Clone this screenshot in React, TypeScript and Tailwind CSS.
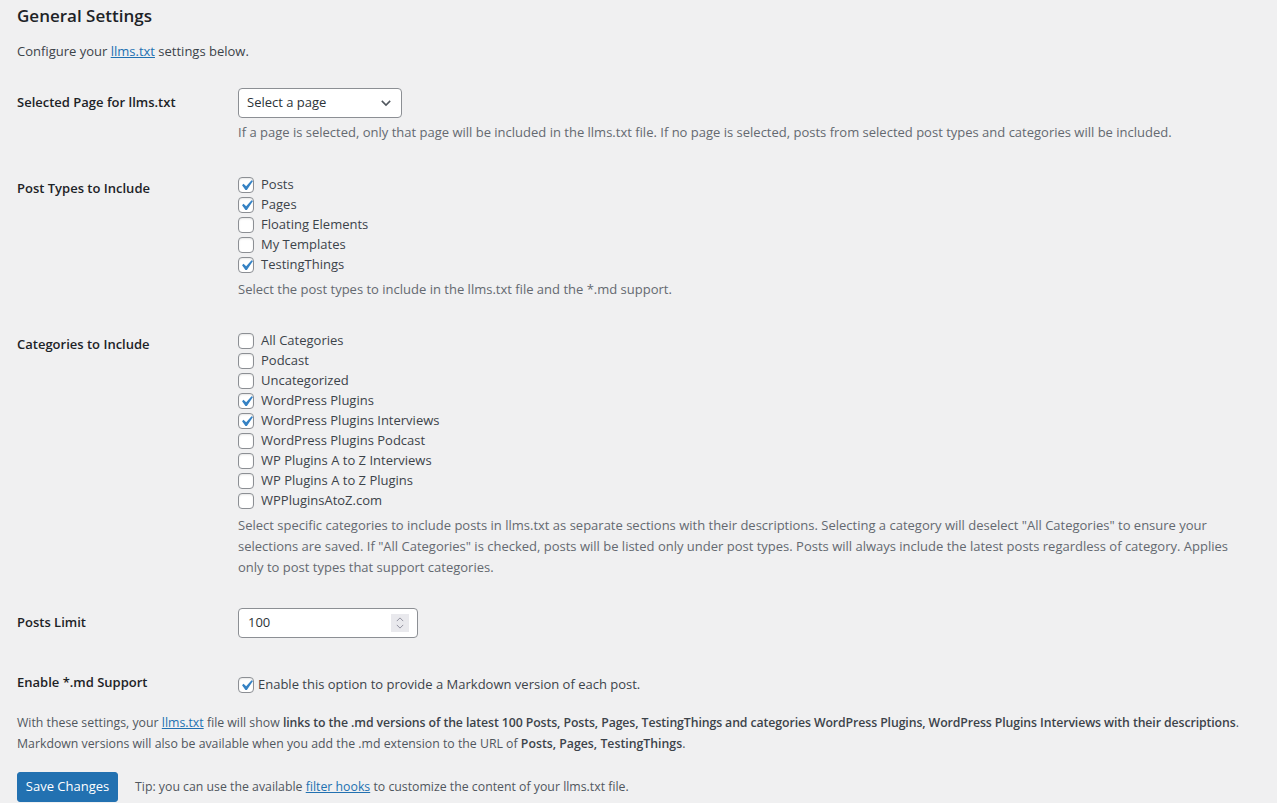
import React from "react";

const postTypes = [
  { label: "Posts", checked: true },
  { label: "Pages", checked: true },
  { label: "Floating Elements", checked: false },
  { label: "My Templates", checked: false },
  { label: "TestingThings", checked: true },
];

const categories = [
  { label: "All Categories", checked: false },
  { label: "Podcast", checked: false },
  { label: "Uncategorized", checked: false },
  { label: "WordPress Plugins", checked: true },
  { label: "WordPress Plugins Interviews", checked: true },
  { label: "WordPress Plugins Podcast", checked: false },
  { label: "WP Plugins A to Z Interviews", checked: false },
  { label: "WP Plugins A to Z Plugins", checked: false },
  { label: "WPPluginsAtoZ.com", checked: false },
];

function Checkbox({ checked }: { checked: boolean }) {
  return (
    <span className="relative inline-block w-4 h-4 shrink-0 rounded bg-white border border-[#8c8f94] shadow-[inset_0_1px_2px_rgba(0,0,0,0.1)]">
      {checked && (
        <svg
          viewBox="0 0 20 20"
          className="absolute -left-[3px] -top-[3px] w-[21px] h-[21px]"
        >
          <path
            d="M14.83 4.89l1.34.94-5.81 8.38H9.02L5.78 9.67l1.34-1.25 2.57 2.4z"
            fill="#3582c4"
          />
        </svg>
      )}
    </span>
  );
}

function CheckList({ items }: { items: { label: string; checked: boolean }[] }) {
  return (
    <div className="flex flex-col">
      {items.map((item) => (
        <label key={item.label} className="flex items-center gap-[7px] h-5 text-[#3c434a]">
          <Checkbox checked={item.checked} />
          <span>{item.label}</span>
        </label>
      ))}
    </div>
  );
}

export default function App() {
  return (
    <div
      className="min-h-screen overflow-hidden bg-[#f0f0f1] pl-[17px] pr-5 text-[13px] text-[#3c434a]"
      style={{ fontFamily: '"Open Sans", "Liberation Sans", Arial, sans-serif' }}
    >
      <h2 className="pt-[5px] text-[17px] leading-[22px] font-semibold text-[#1d2327]">
        General Settings
      </h2>
      <p className="mt-[14px] leading-5">
        Configure your{" "}
        <a href="#" className="text-[#2271b1] underline">
          llms.txt
        </a>{" "}
        settings below.
      </p>

      {/* selected page */}
      <div className="grid grid-cols-[221px_1fr] mt-[27px]">
        <div className="h-[30px] flex items-center font-semibold text-[#1d2327]">
          Selected Page for llms.txt
        </div>
        <div>
          <div className="w-[164px] h-[30px] flex items-center justify-between bg-white border border-[#8c8f94] rounded pl-2 pr-[8px] text-[#2c3338]">
            <span>Select a page</span>
            <svg viewBox="0 0 20 20" className="w-[14px] h-[14px]">
              <path d="M4 7l6 6 6-6" fill="none" stroke="#50575e" strokeWidth="2.2" />
            </svg>
          </div>
          <p className="mt-1 leading-5 text-[#646970]">
            If a page is selected, only that page will be included in the llms.txt file. If no page is selected, posts from selected post types and categories will be included.
          </p>
        </div>
      </div>

      {/* post types */}
      <div className="grid grid-cols-[221px_1fr] mt-[33px]">
        <div className="pt-[3px] leading-5 font-semibold text-[#1d2327]">Post Types to Include</div>
        <div>
          <CheckList items={postTypes} />
          <p className="mt-1 leading-5 text-[#646970]">
            Select the post types to include in the llms.txt file and the *.md support.
          </p>
        </div>
      </div>

      {/* categories */}
      <div className="grid grid-cols-[221px_1fr] mt-[32px]">
        <div className="pt-[3px] leading-5 font-semibold text-[#1d2327]">Categories to Include</div>
        <div className="pr-[10px]">
          <CheckList items={categories} />
          <p className="mt-1 leading-[21px] text-[#646970]">
            Select specific categories to include posts in llms.txt as separate sections with their descriptions. Selecting a category will deselect "All Categories" to ensure your selections are saved. If "All Categories" is checked, posts will be listed only under post types. Posts will always include the latest posts regardless of category. Applies only to post types that support categories.
          </p>
        </div>
      </div>

      {/* posts limit */}
      <div className="grid grid-cols-[221px_1fr] mt-[30px]">
        <div className="h-[30px] flex items-center font-semibold text-[#1d2327]">Posts Limit</div>
        <div>
          <div className="relative w-[180px] h-[30px] flex items-center bg-white border border-[#8c8f94] rounded pl-[9px] text-[#2c3338]">
            <span>100</span>
            <span className="absolute right-[8px] top-[5px] w-[18px] h-[18px] bg-[#e9e9ed] flex flex-col items-center justify-center gap-[2px]">
              <svg viewBox="0 0 10 6" className="w-[8px] h-[5px]">
                <path d="M1 5l4-4 4 4" fill="none" stroke="#8f8f9d" strokeWidth="1.2" />
              </svg>
              <svg viewBox="0 0 10 6" className="w-[8px] h-[5px]">
                <path d="M1 1l4 4 4-4" fill="none" stroke="#8f8f9d" strokeWidth="1.2" />
              </svg>
            </span>
          </div>
        </div>
      </div>

      {/* md support */}
      <div className="grid grid-cols-[221px_1fr] mt-[37px]">
        <div className="leading-5 -mt-[3px] font-semibold text-[#1d2327]">Enable *.md Support</div>
        <label className="flex items-center gap-1 h-5 text-[#3c434a]">
          <Checkbox checked />
          <span>Enable this option to provide a Markdown version of each post.</span>
        </label>
      </div>

      <p className="mt-[17px] text-[12.3px] leading-[21px] text-[#50575e]">
        <span className="whitespace-nowrap">
          With these settings, your{" "}
          <a href="#" className="text-[#2271b1] underline">
            llms.txt
          </a>{" "}
          file will show{" "}
          <strong className="font-semibold tracking-[-0.1px] text-[#3c434a]">
            links to the .md versions of the latest 100 Posts, Posts, Pages, TestingThings and categories WordPress Plugins, WordPress Plugins Interviews with their descriptions
          </strong>
          .
        </span>
        <br />
        Markdown versions will also be available when you add the .md extension to the URL of{" "}
        <strong className="font-semibold text-[#3c434a]">Posts, Pages, TestingThings</strong>.
      </p>

      <div className="flex items-center mt-[18px] gap-[17px] pb-2">
        <button className="h-[30px] w-[101px] rounded-[3px] bg-[#2271b1] border border-[#2271b1] text-white text-[13px]">
          Save Changes
        </button>
        <span className="text-[12.3px] text-[#50575e]">
          Tip: you can use the available{" "}
          <a href="#" className="text-[#2271b1] underline">
            filter hooks
          </a>{" "}
          to customize the content of your llms.txt file.
        </span>
      </div>
    </div>
  );
}
